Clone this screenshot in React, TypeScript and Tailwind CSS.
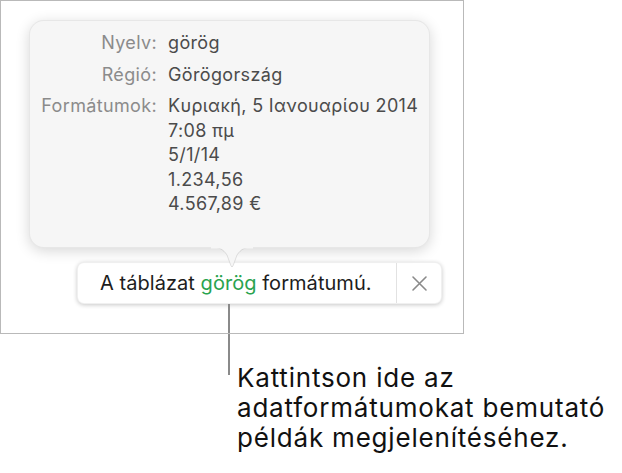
import React from "react";

const font = { fontFamily: "Inter, 'Noto Sans', sans-serif" };

export default function App() {
  return (
    <div className="w-[622px] h-[473px] bg-white overflow-hidden" style={font}>
      <div className="relative w-[464px] h-[334px] border border-[#b9b9b9] bg-white pt-[19px]">
        {/* popover */}
        <div className="relative z-10 ml-[28px] w-[401px] h-[228px] rounded-[15px] bg-[#f6f6f6] border border-black/[0.06] shadow-[0_3px_14px_rgba(0,0,0,0.16)] pt-[10px]">
          <div className="grid grid-cols-[127px_1fr] gap-x-[11px] gap-y-[7px] text-[18px] leading-[24.5px] tracking-[0.35px]">
            <div className="text-right text-[#8b8b8b]">Nyelv:</div>
            <div className="text-[#4b4b4b]">görög</div>
            <div className="text-right text-[#8b8b8b]">Régió:</div>
            <div className="text-[#4b4b4b]">Görögország</div>
            <div className="text-right text-[#8b8b8b]">Formátumok:</div>
            <div className="text-[#4b4b4b] flex flex-col">
              <span>Κυριακή, 5 Ιανουαρίου 2014</span>
              <span>7:08 πμ</span>
              <span>5/1/14</span>
              <span>1.234,56</span>
              <span>4.567,89 €</span>
            </div>
          </div>
          {/* arrow */}
          <svg
            className="absolute left-[181px] top-[226px]"
            width="42"
            height="22"
            viewBox="0 0 42 22"
          >
            <path
              d="M0 0 C8 0 12 2 16 8 L20 19 Q21 21 22 19 L26 8 C30 2 34 0 42 0 Z"
              fill="#f6f6f6"
              stroke="rgba(0,0,0,0.10)"
              strokeWidth="1"
            />
            <rect x="0" y="-1" width="42" height="2.5" fill="#f6f6f6" />
          </svg>
        </div>
        {/* bar */}
        <div className="ml-[76px] mt-[14px] w-[365px] h-[42px] rounded-[7px] bg-white border border-black/[0.06] shadow-[0_1px_4px_rgba(0,0,0,0.22)] flex items-stretch">
          <div className="flex-1 flex items-center pl-[22px] text-[20px] text-[#1d1d1d] tracking-[0.05px]">
            <span>
              A táblázat <span className="text-[#29a34f]">görög</span> formátumú.
            </span>
          </div>
          <div className="w-[45px] border-l border-[#e2e2e2] flex items-center justify-center">
            <svg width="17" height="17" viewBox="0 0 17 17">
              <path d="M2 2 L15 15 M15 2 L2 15" stroke="#8a8a8a" strokeWidth="1.6" strokeLinecap="round" />
            </svg>
          </div>
        </div>
        <div className="ml-[227px] w-[2px] h-[29px] bg-[#8a8a8a]" />
      </div>
      <div className="flex">
        <div className="ml-[228px] w-[2px] h-[41px] bg-[#8a8a8a] shrink-0" />
        <div className="ml-[7px] mt-[29px] text-[26px] leading-[30px] text-[#111] tracking-[0.8px]">
          Kattintson ide az
          <br />
          adatformátumokat bemutató
          <br />
          példák megjelenítéséhez.
        </div>
      </div>
    </div>
  );
}
